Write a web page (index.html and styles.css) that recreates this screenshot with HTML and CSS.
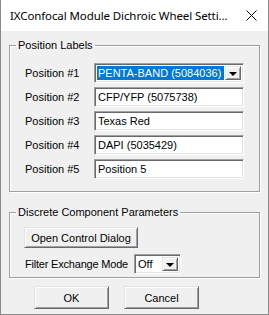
FILE: index.html
```html
<!DOCTYPE html>
<html>
<head lang="en">
    <meta charset="UTF-8">
    <title>Dichroic Wheel Settings</title>
    <link rel="stylesheet" href="styles.css">
</head>
<body>
<div class="dialog">
    <div class="titlebar">
        <span class="title">IXConfocal Module Dichroic Wheel Setti...</span>
        <svg class="close" width="11" height="11" viewBox="0 0 11 11">
            <path d="M0.5 0.5L10.5 10.5M10.5 0.5L0.5 10.5" stroke="#000" stroke-width="1" fill="none"/>
        </svg>
    </div>
    <div class="body">
        <fieldset class="group">
            <legend>Position Labels</legend>
            <div class="labels">
                <span class="lbl">Position #1</span>
                <div class="combo">
                    <span class="value sel">PENTA-BAND (5084036)</span>
                    <span class="drop"><i></i></span>
                </div>
                <span class="lbl">Position #2</span>
                <input class="edit" type="text" value="CFP/YFP (5075738)">
                <span class="lbl">Position #3</span>
                <input class="edit" type="text" value="Texas Red">
                <span class="lbl">Position #4</span>
                <input class="edit" type="text" value="DAPI (5035429)">
                <span class="lbl">Position #5</span>
                <input class="edit" type="text" value="Position 5">
            </div>
        </fieldset>
        <fieldset class="group params">
            <legend>Discrete Component Parameters</legend>
            <div class="params-inner">
                <button class="btn ctl">Open Control Dialog</button>
                <div class="mode">
                    <span class="lbl">Filter Exchange Mode</span>
                    <div class="combo small">
                        <span class="value">Off</span>
                        <span class="drop"><i></i></span>
                    </div>
                </div>
            </div>
        </fieldset>
        <div class="actions">
            <button class="btn">OK</button>
            <button class="btn">Cancel</button>
        </div>
    </div>
</div>
</body>
</html>
```

FILE: styles.css
```css
*{
    margin: 0;
    padding: 0;
    box-sizing: border-box;
}
html,body{
    width: 100%;
    height: 100%;
    background: #fff;
}
.dialog{
    width: 269px;
    height: 315px;
    border: 1px solid #8a8a8a;
    border-top: none;
    background: #f0f0f0;
    font-family: "Liberation Sans", Arial, sans-serif;
    font-size: 11px;
    color: #000;
    display: flex;
    flex-direction: column;
}
.titlebar{
    height: 31px;
    background: #fff;
    display: flex;
    align-items: center;
    justify-content: space-between;
    padding: 0 11px 0 9px;
}
.title{
    font-family: "Noto Sans", sans-serif;
    font-size: 11.5px;
    letter-spacing: -0.1px;
    white-space: nowrap;
}
.close{
    display: block;
}
.body{
    padding: 8px 8px 0 8px;
}
.group{
    border: 1px solid #a0a0a0;
    box-shadow: 1px 1px 0 #fff, inset 1px 1px 0 #fff;
    padding: 0;
    margin: 0;
}
.group legend{
    margin-left: 6px;
    padding: 0 2px;
    line-height: 13px;
}
.labels{
    display: grid;
    grid-template-columns: 69px 150px;
    grid-auto-rows: 20px;
    row-gap: 4px;
    align-items: center;
    padding: 11px 15px 12px 15px;
}
.lbl{
    white-space: nowrap;
}
.edit,.combo{
    height: 20px;
    background: #fff;
    border-top: 1px solid #a0a0a0;
    border-left: 1px solid #a0a0a0;
    border-right: 1px solid #fff;
    border-bottom: 1px solid #fff;
    box-shadow: inset 1px 1px 0 #696969, inset -1px -1px 0 #e3e3e3;
}
.edit{
    width: 150px;
    font: inherit;
    color: #000;
    padding: 0 3px;
    outline: none;
}
.combo{
    display: flex;
    align-items: stretch;
    padding: 2px;
}
.combo .value{
    flex: 1;
    display: flex;
    align-items: center;
    padding-left: 1px;
    margin-right: 1px;
    white-space: nowrap;
    overflow: hidden;
}
.combo .sel{
    background: #0078d7;
    color: #fff;
}
.drop{
    width: 16px;
    background: #f0f0f0;
    border-top: 1px solid #e3e3e3;
    border-left: 1px solid #e3e3e3;
    border-right: 1px solid #696969;
    border-bottom: 1px solid #696969;
    box-shadow: inset 1px 1px 0 #fff, inset -1px -1px 0 #a0a0a0;
    display: flex;
    align-items: center;
    justify-content: center;
}
.drop i{
    width: 0;
    height: 0;
    border-left: 4px solid transparent;
    border-right: 4px solid transparent;
    border-top: 4px solid #000;
    margin-top: 1px;
}
.params{
    margin-top: 14px;
}
.params-inner{
    padding: 8px 15px 3px 14px;
    display: flex;
    flex-direction: column;
    align-items: flex-start;
    gap: 6px;
}
.mode{
    display: flex;
    align-items: center;
    padding-left: 1px;
    gap: 6px;
}
.mode .lbl{
    letter-spacing: -0.2px;
}
.combo.small{
    width: 47px;
}
.btn{
    font: inherit;
    color: #000;
    height: 23px;
    width: 75px;
    background: #f0f0f0;
    border-top: 1px solid #e3e3e3;
    border-left: 1px solid #e3e3e3;
    border-right: 1px solid #696969;
    border-bottom: 1px solid #696969;
    box-shadow: inset 1px 1px 0 #fff, inset -1px -1px 0 #a0a0a0;
}
.btn.ctl{
    width: 114px;
    height: 21px;
}
.actions{
    display: flex;
    gap: 15px;
    padding: 8px 0 0 25px;
}
```
